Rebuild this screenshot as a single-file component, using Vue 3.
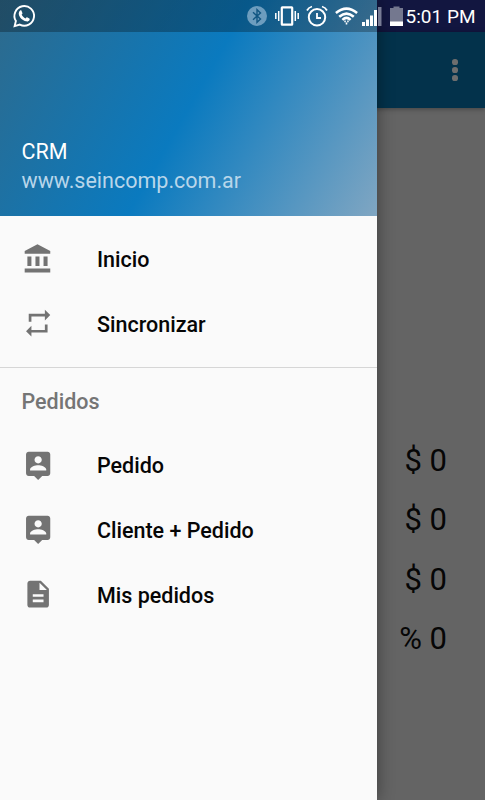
<script setup>
import { ref } from "vue";

const isDrawerOpen = ref(true);

const icons = {
  home: "M4 10v7h3v-7H4zm6 0v7h3v-7h-3zM2 22h19v-3H2v3zm14-12v7h3v-7h-3zm-4.5-9L2 6v2h19V6l-9.5-5z",
  sync: "M7 7h10v3l4-4-4-4v3H5v6h2V7zm10 10H7v-3l-4 4 4 4v-3h12v-6h-2v4z",
  person:
    "M19 2H5c-1.11 0-2 .9-2 2v14c0 1.1.89 2 2 2h4l3 3 3-3h4c1.1 0 2-.9 2-2V4c0-1.1-.9-2-2-2zm-7 3.3c1.49 0 2.7 1.21 2.7 2.7 0 1.49-1.21 2.7-2.7 2.7-1.49 0-2.7-1.21-2.7-2.7 0-1.49 1.21-2.7 2.7-2.7zM18 16H6v-.9c0-2 4-3.1 6-3.1s6 1.1 6 3.1v.9z",
  file: "M14 2H6c-1.1 0-1.99.9-1.99 2L4 20c0 1.1.89 2 1.99 2H18c1.1 0 2-.9 2-2V8l-6-6zm2 16H8v-2h8v2zm0-4H8v-2h8v2zm-3-5V3.5L18.5 9H13z",
};

const mainItems = [
  { label: "Inicio", icon: "home" },
  { label: "Sincronizar", icon: "sync" },
];

const orderItems = [
  { label: "Pedido", icon: "person" },
  { label: "Cliente + Pedido", icon: "person" },
  { label: "Mis pedidos", icon: "file" },
];

const totals = ["$ 0", "$ 0", "$ 0", "% 0"];
</script>

<template>
  <div class="screen">
    <div class="page">
      <div class="status-space"></div>
      <header class="toolbar">
        <button class="more-btn" @click="isDrawerOpen = !isDrawerOpen">
          <span class="dot"></span>
          <span class="dot"></span>
          <span class="dot"></span>
        </button>
      </header>
      <main class="totals">
        <p v-for="(total, index) in totals" :key="index" class="total">
          {{ total }}
        </p>
      </main>
    </div>

    <aside v-if="isDrawerOpen" class="drawer">
      <div class="drawer-header">
        <p class="drawer-title">CRM</p>
        <p class="drawer-subtitle">www.seincomp.com.ar</p>
      </div>

      <nav class="menu">
        <a v-for="item in mainItems" :key="item.label" class="menu-item">
          <svg class="menu-icon" viewBox="0 0 24 24">
            <path :d="icons[item.icon]" />
          </svg>
          <span class="menu-label">{{ item.label }}</span>
        </a>
      </nav>

      <nav class="menu menu-group">
        <h2 class="menu-heading">
          <span class="menu-label">Pedidos</span>
        </h2>
        <a v-for="item in orderItems" :key="item.label" class="menu-item">
          <svg class="menu-icon" viewBox="0 0 24 24">
            <path :d="icons[item.icon]" />
          </svg>
          <span class="menu-label">{{ item.label }}</span>
        </a>
      </nav>
    </aside>

    <div class="status-bar">
      <svg class="whatsapp" width="24" height="24" viewBox="0 0 24 24">
        <path
          d="M2.6 22.2 3.9 17A9.8 9.8 0 1 1 7.8 20.6z"
          fill="none"
          stroke="#fff"
          stroke-width="1.9"
        />
        <path
          d="M8.1 6.4c.6-.4 1-.3 1.3.2l1 2.3c.2.5-.1.9-.8 1.7.9 1.9 2.1 3 4 3.8.7-.9 1-1.3 1.5-1.1l2.2 1.1c.5.3.5.8.2 1.5-.6 1.2-2 1.7-3.3 1.4-3.9-.9-6.8-3.9-7.4-7.1-.2-1.6.4-3 1.3-3.8z"
          fill="#fff"
        />
      </svg>

      <div class="status-icons">
        <svg class="bluetooth" width="20" height="20" viewBox="0 0 20 20">
          <circle cx="10" cy="10" r="10" fill="#6d9dbe" />
          <path
            d="M6 6.3 13.5 13 10 16.3V3.7L13.5 7 6 13.7"
            fill="none"
            stroke="#115682"
            stroke-width="1.4"
          />
        </svg>
        <svg class="vibrate" width="24" height="20" viewBox="0 0 24 20">
          <rect x="6.8" y="1.3" width="10.4" height="17.4" rx="0.5" fill="none" stroke="#fff" stroke-width="2.2" />
          <path d="M3.7 5v10M.8 7v6M20.3 5v10M23.2 7v6" stroke="#fff" stroke-width="1.5" />
        </svg>
        <svg class="alarm" width="22" height="22" viewBox="0 0 22 22">
          <circle cx="11" cy="12.3" r="8.2" fill="none" stroke="#fff" stroke-width="2" />
          <path
            d="M11 8v5h4M1 5.5Q2.5 2.5 6 1.5M21 5.5Q19.5 2.5 16 1.5"
            fill="none"
            stroke="#fff"
            stroke-width="1.8"
          />
        </svg>
        <svg class="wifi" width="23" height="18" viewBox="0 0 23 18">
          <path
            d="M.9 6Q11.5-2.8 22.1 6M4.2 9.8Q11.5 3.4 18.8 9.8M7.4 12.8Q11.5 9 15.6 12.8"
            fill="none"
            stroke="#fff"
            stroke-width="2.5"
          />
          <path
            d="M9.3 14.3h1.5M12.2 14.3h1.5M10.7 16.5h1.6"
            stroke="#fff"
            stroke-width="1.8"
          />
        </svg>
        <svg class="signal" width="20" height="20" viewBox="0 0 20 20">
          <path
            d="M0 16h3v4H0zM4 13.5h3V20H4zM8 9.5h3V20H8zM12 4h3v16h-3z"
            fill="#fff"
          />
          <path d="M16 1h3.5v19H16z" fill="#777b94" />
        </svg>
        <svg class="battery" width="13" height="20" viewBox="0 0 13 20">
          <path d="M0 2h3.5V.5h6V2H13v18H0z" fill="#74788f" />
          <path d="M0 15.5h13V20H0z" fill="#fff" />
        </svg>
        <span class="clock">5:01 PM</span>
      </div>
    </div>
  </div>
</template>

<style>
body {
  margin: 0;
  overflow: hidden;
}
</style>

<style scoped>
.screen {
  position: relative;
  width: 485px;
  height: 800px;
  overflow: hidden;
  font-family: Roboto, "Liberation Sans", sans-serif;
}

.page {
  display: flex;
  flex-direction: column;
  height: 100%;
  background: #646464;
}

.status-space {
  height: 32px;
  background: #121640;
}

.toolbar {
  display: flex;
  align-items: center;
  justify-content: flex-end;
  height: 75.5px;
  padding-right: 20.5px;
  box-sizing: border-box;
  background: #03324b;
  box-shadow: 0 1px 5px rgba(0, 0, 0, 0.35);
}

.more-btn {
  display: flex;
  flex-direction: column;
  gap: 2.4px;
  padding: 0 6.5px;
  border: none;
  background: none;
}

.dot {
  width: 5.7px;
  height: 5.7px;
  border-radius: 50%;
  background: #6e6e6e;
}

.totals {
  flex: 1;
  display: flex;
  flex-direction: column;
  align-items: flex-end;
  padding: 323.5px 38px 0 0;
}

.total {
  margin: 0;
  font-size: 31px;
  line-height: 59.3px;
  color: #060606;
}

.drawer {
  position: absolute;
  top: 0;
  left: 0;
  width: 377.3px;
  height: 100%;
  background: #fafafa;
  box-shadow: 0 0 16px rgba(0, 0, 0, 0.4);
}

.drawer-header {
  display: flex;
  flex-direction: column;
  justify-content: flex-end;
  height: 215.5px;
  padding: 0 21.5px 21px;
  box-sizing: border-box;
  background: linear-gradient(119.7deg, #2e6a8c 0%, #0a7abf 50%, #80a6c2 100%);
}

.drawer-title,
.drawer-subtitle {
  margin: 0;
  font-size: 21.5px;
  line-height: 29px;
  color: #fff;
}

.drawer-subtitle {
  color: #b8d6ea;
}

.menu {
  padding: 11px 0;
  font-size: 21.5px;
  font-weight: 500;
}

.menu-group {
  padding-top: 0;
  border-top: 1px solid #d6d6d6;
}

.menu-heading,
.menu-item {
  display: flex;
  align-items: center;
  height: 64.7px;
  padding: 0 21.5px;
  color: #060606;
}

.menu-heading {
  margin: 0;
  font-size: inherit;
  font-weight: 500;
  color: #757575;
}

.menu-label {
  padding-top: 2px;
}

.menu-icon {
  width: 32.3px;
  height: 32.3px;
  margin-right: 43.2px;
  fill: #737373;
}

.status-bar {
  position: absolute;
  top: 0;
  left: 0;
  display: flex;
  align-items: center;
  justify-content: space-between;
  width: 100%;
  height: 32px;
  padding: 0 9.5px 0 12px;
  box-sizing: border-box;
  background: linear-gradient(
    to right,
    rgba(0, 0, 0, 0.28) 377px,
    transparent 377px
  );
}

.status-icons {
  display: flex;
  align-items: center;
}

.vibrate {
  margin-left: 8px;
}

.alarm,
.wifi {
  margin-left: 7px;
}

.signal {
  margin-left: 4px;
}

.battery {
  margin-left: 8px;
}

.clock {
  margin-left: 3px;
  padding-top: 2px;
  font-size: 19px;
  line-height: 30px;
  color: #fff;
  white-space: nowrap;
}
</style>
